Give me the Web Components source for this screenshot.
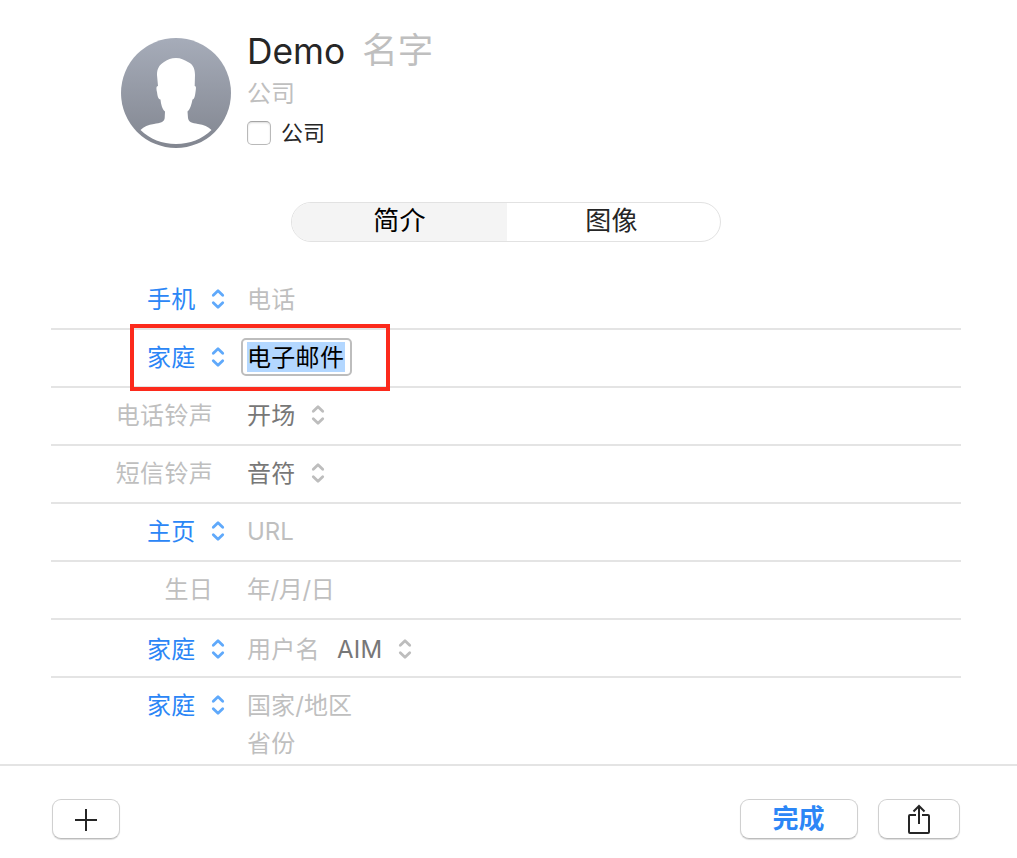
<!DOCTYPE html>
<html lang="zh-CN">
<head>
<meta charset="utf-8">
<title>联系人</title>
<style>
html,body{margin:0;height:100%;background:#fff}
body{font-family:Inter,"Noto Sans CJK SC",sans-serif;overflow:hidden}
</style>
</head>
<body>
<contact-editor></contact-editor>
<script>
const define=(name,html)=>customElements.define(name,class extends HTMLElement{
  constructor(){super();this.attachShadow({mode:'open'}).innerHTML=html;}
});

define('contact-avatar',`<style>:host{display:block;width:110px;height:110px}svg{display:block}</style>
<svg width="110" height="110" viewBox="0 0 110 110"><defs><linearGradient id="g" x1="0" y1="0" x2="0" y2="1"><stop offset="0" stop-color="#a6acb9"/><stop offset="1" stop-color="#828690"/></linearGradient></defs>
<circle cx="55" cy="55" r="55" fill="url(#g)"/>
<path fill="#fff" d="M55 20C60 20 63 22 67 24C72 26 74 31 74 37L73.700 48C75.500 48 75 51 74.500 54C74 58 73.500 61 71.500 61.500C70.500 66 69.500 71 66.500 73.500L67 80C67.500 84 71 85 77 86C83 87 87 88.500 90.500 92C81 101 69 106 55 106C41 106 29 101 19.500 92C23 88.500 27 87 33 86C39 85 43.500 84 43.700 80L44 73.500C41 71 40 66 39.500 61.500C37 61 36.500 58 36 54C35.300 51 35 48 37 48L36 37C36 31 38 27 43 24C47 21.500 50 20 55 20Z"/></svg>`);

define('up-down',`<style>:host{display:block;width:14px;height:22px;color:#5fa9fb}:host([muted]){color:#bdbdbd}svg{display:block}</style>
<svg width="14" height="22" viewBox="0 0 14 22" fill="none" stroke="currentColor" stroke-width="2.800" stroke-linecap="round" stroke-linejoin="round"><path d="M2.300 7.200L7 2.700L11.700 7.200M2.300 14.800L7 19.300L11.700 14.800"/></svg>`);

define('check-field',`<style>:host{display:flex;align-items:center;gap:10px;font-size:22px;line-height:28px;color:#262626}
i{width:22px;height:22px;border:1px solid #b9b9b9;border-top-color:#a5a5a5;border-radius:5px;background:#fff;box-shadow:inset 0 1px 2px #dcdcdc}</style><i></i><span><slot></slot></span>`);

define('segment-control',`<style>:host{display:grid;grid-template-columns:215px 213px;box-sizing:border-box;width:430px;height:40px;border:1px solid #e2e2e2;border-radius:20px;overflow:hidden;font-size:26px;line-height:36px;text-align:center;letter-spacing:.3px}
.on{background:#f4f4f4;color:#000}.off{color:#262626;padding-right:4px}</style><div class="on"><slot name="first"></slot></div><div class="off"><slot name="second"></slot></div>`);

define('field-row',`<style>:host{display:grid;grid-template-columns:162px 34px 1fr;box-sizing:border-box;height:58px;border-bottom:2px solid #e4e4e4;align-items:center;font-size:24px;line-height:36px;letter-spacing:.3px;color:#bfbfbf}
:host([low]){padding-top:3px}
:host([tall]){height:86px;border:0;padding:10px 0 0;align-items:start}
.label{justify-self:end;display:flex;align-items:center;white-space:nowrap}
:host([blue]) .label{color:#2b86f6;margin-right:17.500px}
.arrow{margin:-2px 0 0 -2px}
:host(:not([blue])) .arrow{visibility:hidden}
:host([tall]) .arrow{margin-top:6px}
.value{display:flex;align-items:center}
:host([tall]) .value{display:block;line-height:38px;margin-top:-1px}</style>
<div class="label"><slot name="label"></slot></div><div class="arrow"><up-down></up-down></div><div class="value"><slot></slot></div>`);

define('menu-value',`<style>:host{display:flex;align-items:center;gap:16px;color:#777}up-down{margin:-2px 0 0 -1px}</style><span><slot></slot></span><up-down muted></up-down>`);

define('text-field',`<style>:host{display:block;box-sizing:border-box;width:111px;height:38px;margin:-2px 0 0 -6px;padding:2px 4px;border:2px solid #bdbdbd;border-radius:5px;color:#000;background:#fff}
span{display:block;height:30px;line-height:32px;padding:0;background:#b3d7ff;width:98px}</style><span><slot></slot></span>`);

define('focus-frame',`<style>:host{display:block;position:absolute;left:130px;top:324px;width:260px;height:67px;box-sizing:border-box;border:4px solid #fc2a1c}</style>`);

define('push-button',`<style>:host{display:flex;align-items:center;justify-content:center;box-sizing:border-box;height:40px;border:1px solid #d0d0d0;border-bottom-color:#bcbcbc;border-radius:9px;background:#fff;box-shadow:0 1px 1px #ddd;color:#2b86f6;font-size:26px;font-weight:700;line-height:36px}</style><slot></slot>`);

define('bottom-bar',`<style>:host{display:flex;box-sizing:border-box;height:94px;border-top:2px solid #e4e4e4;padding:33px 57px 0 52px;align-items:flex-start}
.add{width:68px}.done{width:118px;margin-left:auto}.share{width:82px;margin-left:20px}svg{display:block}.done span{padding:0 1px 0 0}</style>
<push-button class="add"><svg width="22" height="22" viewBox="0 0 22 22" stroke="#262626" stroke-width="2" style="margin-top:2px"><path d="M11 0V22M0 11H22"/></svg></push-button>
<push-button class="done"><span>完成</span></push-button>
<push-button class="share"><svg width="24" height="32" viewBox="0 0 24 32" fill="none" stroke="#262626" stroke-width="2" style="margin-bottom:1px"><path d="M9 12H3Q2 12 2 13V29Q2 30 3 30H21Q22 30 22 29V13Q22 12 21 12H15M12 21V3M6.500 8.500L12 3L17.500 8.500"/></svg></push-button>`);

define('contact-editor',`<style>:host{display:flex;flex-direction:column;width:1017px;height:858px}
header{display:flex;height:202px;box-sizing:border-box;padding:38px 0 0 121px}
.names{margin-left:16px}
.name{display:flex;gap:17px;line-height:40px;height:41px;margin-top:-7px;color:#262626}
.name .g,.company{color:#bfbfbf}.name .g{font-size:35.500px}.name .d{font-size:35.300px;padding-top:1px}
.company{font-size:24px;line-height:36px;margin-top:4px}
check-field{margin-top:7px}
segment-control{margin-left:291px}
main{flex:1;margin:30px 56px 0 51px;min-height:0;overflow:hidden}
.aim{margin-left:17px}
bottom-bar{flex:none}</style>
<header><contact-avatar></contact-avatar><div class="names"><div class="name"><span class="d">Demo</span><span class="g">名字</span></div><div class="company">公司</div><check-field>公司</check-field></div></header>
<segment-control><span slot="first">简介</span><span slot="second">图像</span></segment-control>
<main>
<field-row blue><span slot="label">手机</span>电话</field-row>
<field-row blue><span slot="label">家庭</span><text-field>电子邮件</text-field></field-row>
<field-row><span slot="label">电话铃声</span><menu-value>开场</menu-value></field-row>
<field-row><span slot="label">短信铃声</span><menu-value>音符</menu-value></field-row>
<field-row blue><span slot="label">主页</span><span style="letter-spacing:0">URL</span></field-row>
<field-row><span slot="label">生日</span><span style="letter-spacing:-.4px">年/月/日</span></field-row>
<field-row blue low><span slot="label">家庭</span>用户名<menu-value class="aim">AIM</menu-value></field-row>
<field-row blue tall><span slot="label">家庭</span><div style="letter-spacing:.1px">国家/地区</div><div>省份</div></field-row>
</main>
<bottom-bar></bottom-bar>
<focus-frame></focus-frame>`);
</script>
</body>
</html>
